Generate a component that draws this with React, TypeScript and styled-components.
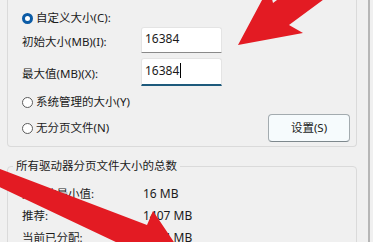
import React from 'react';
import styled, { createGlobalStyle } from 'styled-components';

const GlobalStyle = createGlobalStyle`
  html, body {
    margin: 0;
    padding: 0;
    background: #f0f0f0;
    overflow: hidden;
  }
  body {
    font-family: "Noto Sans", "Noto Sans CJK SC", sans-serif;
  }
`;

const Window = styled.div`
  position: relative;
  width: 373px;
  height: 242px;
  overflow: hidden;
  display: flex;
  background: #f0f0f0;
  color: #1b1b1b;
  font-size: 11.5px;
  line-height: 16px;
`;

const Dialog = styled.div`
  width: 368px;
  flex: none;
  box-sizing: border-box;
  padding: 0 11px 0 7px;
`;

const Edge = styled.div`
  width: 2px;
  flex: none;
  background: #b6b6b6;
`;

const GroupBox = styled.div`
  margin-top: -10px;
  padding: 18px 6px 4px 14px;
  border: 1px solid #dadada;
  border-top: none;
  border-radius: 0 0 4px 4px;
`;

const RadioRow = styled.label<{ $gap?: number }>`
  display: flex;
  align-items: center;
  gap: 3px;
  height: 20px;
  margin-top: ${p => p.$gap ?? 0}px;
`;

const RadioDot = styled.span<{ $checked?: boolean }>`
  width: 11px;
  height: 11px;
  box-sizing: border-box;
  border-radius: 50%;
  background: #fff;
  border: ${p => (p.$checked ? '3px solid #0b5ba6' : '1px solid #5c5c5c')};
`;

const FieldRow = styled.div<{ $gap: number }>`
  display: grid;
  grid-template-columns: 119px 81px;
  align-items: center;
  margin-top: ${p => p.$gap}px;
`;

const FieldLabel = styled.span`
  padding-top: 4px;
`;

const InputBox = styled.div<{ $focused?: boolean }>`
  display: flex;
  align-items: flex-start;
  box-sizing: border-box;
  height: ${p => (p.$focused ? 28 : 26)}px;
  padding: ${p => (p.$focused ? 4 : 3)}px 0 0 3px;
  background: #fff;
  border: 1px solid #e4e4e4;
  border-bottom: ${p => (p.$focused ? '2px solid #1d5a7c' : '1px solid #8a8a8a')};
  border-radius: 3px 3px 0 0;
  font-size: 12px;
`;

const Caret = styled.span`
  width: 1px;
  height: 15px;
  margin-left: 1px;
  background: #000;
`;

const BottomRow = styled.div`
  display: flex;
  align-items: center;
  justify-content: space-between;
  height: 28px;
  margin-top: 2px;
`;

const Button = styled.button`
  width: 82px;
  height: 28px;
  box-sizing: border-box;
  padding: 0;
  border: 1px solid #a3abaf;
  border-bottom-color: #7e888d;
  border-radius: 4px;
  background: #f6fbfd;
  color: #1b1b1b;
  font: inherit;
`;

const Summary = styled.fieldset`
  margin: 11px 0 0;
  padding: 9px 6px 0 14px;
  border: 1px solid #dadada;
  border-radius: 4px;
`;

const SummaryTitle = styled.legend`
  margin-left: -9px;
  padding: 0 3px;
  line-height: 16px;
`;

const InfoRow = styled.div`
  display: grid;
  grid-template-columns: 121px auto;
  align-items: center;
  height: 22px;
`;

const Value = styled.span`
  font-size: 12px;
`;

const Overlay = styled.svg`
  position: absolute;
  inset: 0;
  pointer-events: none;
`;

const fields = [
  { label: '初始大小(MB)(I):', value: '16384', gap: -1, focused: false },
  { label: '最大值(MB)(X):', value: '16384', gap: 5, focused: true },
];

const totals = [
  { label: '允许的最小值:', value: '16 MB' },
  { label: '推荐:', value: '1407 MB' },
  { label: '当前已分配:', value: '1024 MB' },
];

export default function App() {
  return (
    <>
      <GlobalStyle />
      <Window>
        <Dialog>
          <GroupBox>
            <RadioRow>
              <RadioDot $checked />
              自定义大小(C):
            </RadioRow>
            {fields.map(f => (
              <FieldRow key={f.label} $gap={f.gap}>
                <FieldLabel>{f.label}</FieldLabel>
                <InputBox $focused={f.focused}>
                  {f.value}
                  {f.focused && <Caret />}
                </InputBox>
              </FieldRow>
            ))}
            <RadioRow $gap={6}>
              <RadioDot />
              系统管理的大小(Y)
            </RadioRow>
            <BottomRow>
              <RadioRow>
                <RadioDot />
                无分页文件(N)
              </RadioRow>
              <Button>设置(S)</Button>
            </BottomRow>
          </GroupBox>

          <Summary>
            <SummaryTitle>所有驱动器分页文件大小的总数</SummaryTitle>
            {totals.map(t => (
              <InfoRow key={t.label}>
                <span>{t.label}</span>
                <Value>{t.value}</Value>
              </InfoRow>
            ))}
          </Summary>
        </Dialog>
        <Edge />

        <Overlay viewBox="0 0 373 242" width="373" height="242">
          <polygon
            fill="#e31b23"
            points="238,45 269,-13 273,3 285,-6 331,-6 289,25 303,33"
          />
          <polygon
            fill="#e31b23"
            points="-5,167 147,225 153,211 184,257 128,266 137,252 -5,185"
          />
        </Overlay>
      </Window>
    </>
  );
}
